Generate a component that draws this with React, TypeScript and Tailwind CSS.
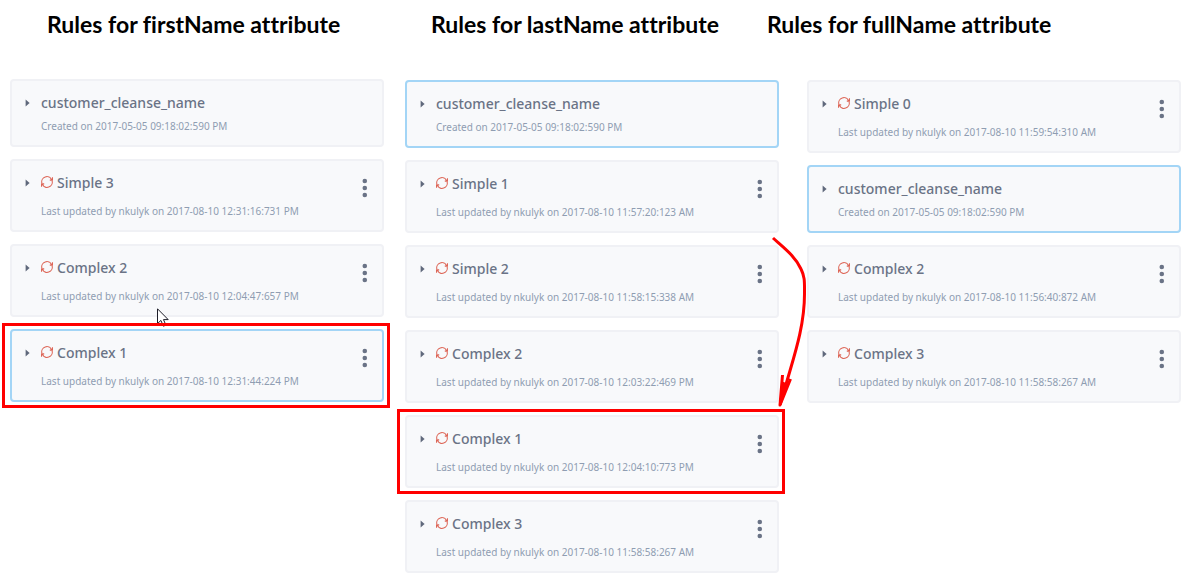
import React from "react";
import clsx from "clsx";

type Rule = {
  name: string
  meta: string
  // the base function has no status icon and no menu
  base?: boolean
  selected?: boolean
  marked?: boolean
  pointer?: boolean
}

const base: Rule = { name: "customer_cleanse_name", meta: "Created on 2017-05-05 09:18:02:590 PM", base: true };

const rule = (name: string, time: string, extra: Partial<Rule> = {}): Rule => ({
  name,
  meta: `Last updated by nkulyk on 2017-08-10 ${time}`,
  ...extra,
});

const firstName: Rule[] = [
  base,
  rule("Simple 3", "12:31:16:731 PM"),
  rule("Complex 2", "12:04:47:657 PM", { pointer: true }),
  rule("Complex 1", "12:31:44:224 PM", { selected: true, marked: true }),
];

const lastName: Rule[] = [
  { ...base, selected: true },
  rule("Simple 1", "11:57:20:123 AM"),
  rule("Simple 2", "11:58:15:338 AM"),
  rule("Complex 2", "12:03:22:469 PM"),
  rule("Complex 1", "12:04:10:773 PM", { marked: true }),
  rule("Complex 3", "11:58:58:267 AM"),
];

const fullName: Rule[] = [
  rule("Simple 0", "11:59:54:310 AM"),
  { ...base, selected: true },
  rule("Complex 2", "11:56:40:872 AM"),
  rule("Complex 3", "11:58:58:267 AM"),
];

const SyncIcon = () => (
  <svg viewBox="0 0 12 12" className="w-3 h-3 mb-0.5 shrink-0" fill="none" stroke="#dd6657" strokeWidth="1.1" aria-hidden="true">
    <path d="M0.9 7.2A5.2 5.2 0 0 1 10.7 3.8M11.5 1.2V4.1H8.8" />
    <path d="M11.1 4.8A5.2 5.2 0 0 1 1.3 8.2M0.5 10.8V7.9H3.2" />
  </svg>
)

const CaretIcon = () => (
  <svg viewBox="0 0 5 8" className="w-[5px] h-2" fill="#5f687b" aria-hidden="true">
    <path d="M0.6 0.5L4.6 4L0.6 7.5Z" />
  </svg>
)

const DotsIcon = () => (
  <svg viewBox="0 0 6 20" className="w-1.5 h-5" fill="#6a7386" aria-hidden="true">
    <circle cx="2.8" cy="3" r="2.3" />
    <circle cx="2.8" cy="10" r="2.3" />
    <circle cx="2.8" cy="17" r="2.3" />
  </svg>
)

const Pointer = () => (
  <svg viewBox="0 0 12 19" className="absolute left-[145px] top-[62px] w-3 h-[19px]" fill="#fff" stroke="#1d1d28" aria-hidden="true">
    <path d="M0.5 0.8V15.6L3.9 12.4L6.4 18.2L8.9 17.1L6.5 11.6H11.2Z" />
  </svg>
)

// hand drawn arrow from Simple 1 down to the marked rule
const Arrow = () => (
  <svg viewBox="0 0 37 174" className="absolute top-[156px] -right-7 w-[37px] h-[174px] z-20 pointer-events-none" fill="none" stroke="#f00" strokeWidth="3" strokeLinejoin="round" aria-hidden="true">
    <path d="M3 2C14 12 25 20 31 33C35 41 34.5 46 34.5 58C34.5 92 23 123 15 152" />
    <path d="M12.5 139L10 169L20.5 143" />
    <path d="M12.5 146L17 148L11 169H9.5Z" fill="#f00" strokeWidth="1" />
  </svg>
)

const RuleCard: React.FC<{ item: Rule }> = ({ item }) => {
  return <li
    className={clsx(
      "relative flex items-start rounded-sm border-2 bg-[#f8f9fb] pt-3 pb-[11px] pl-[13px] pr-3.5",
      item.selected ? "border-[#a3d5f6]" : "border-[#f0f1f5]"
    )}
  >
    <button type="button" aria-label={`Expand ${item.name}`} className="w-4 h-5 shrink-0 flex items-center">
      <CaretIcon />
    </button>

    <div className="flex-1 min-w-0">
      <h2 className="flex items-center gap-x-1 text-sm leading-5 font-medium text-[#6a7386]">
        {!item.base && <SyncIcon />}
        {item.name}
      </h2>
      <p className={clsx("text-[10px] leading-4 text-[#8f9db2]", item.base ? "mt-[5px]" : "mt-2.5")}>{item.meta}</p>
    </div>

    {!item.base && <button type="button" aria-label={`${item.name} menu`} className="mt-[5px] shrink-0">
      <DotsIcon />
    </button>}

    {item.pointer && <Pointer />}
    {item.marked && <div className="absolute -inset-2 -left-2.5 z-10 border-3 border-[#f00] pointer-events-none" />}
  </li>
}

const RuleList: React.FC<{ label: string, items: Rule[], className?: string, children?: React.ReactNode }> = ({ label, items, className, children }) => {
  return <section aria-label={label} className={clsx("relative flex-1 min-w-0", className)}>
    <ul className="flex flex-col gap-y-3">
      {items.map((item) => <RuleCard key={item.name} item={item} />)}
    </ul>
    {children}
  </section>
}

export default function App() {
  return <main className="bg-white font-['Noto_Sans',sans-serif] pb-1">
    <header className="grid grid-cols-[384fr_336fr_422fr] h-[79px] pt-2.5 pl-[47px] font-['Lato',sans-serif] text-[23px] leading-7 font-bold text-black whitespace-nowrap [font-variant-ligatures:none]">
      <h1>Rules for firstName attribute</h1>
      <h1>Rules for lastName attribute</h1>
      <h1>Rules for fullName attribute</h1>
    </header>

    <div className="flex items-start pl-2.5 pr-2">
      <RuleList label="firstName rules" items={firstName} />
      <RuleList label="lastName rules" items={lastName} className="mt-px ml-[21px] mr-7">
        <Arrow />
      </RuleList>
      <RuleList label="fullName rules" items={fullName} className="mt-px" />
    </div>
  </main>
}
